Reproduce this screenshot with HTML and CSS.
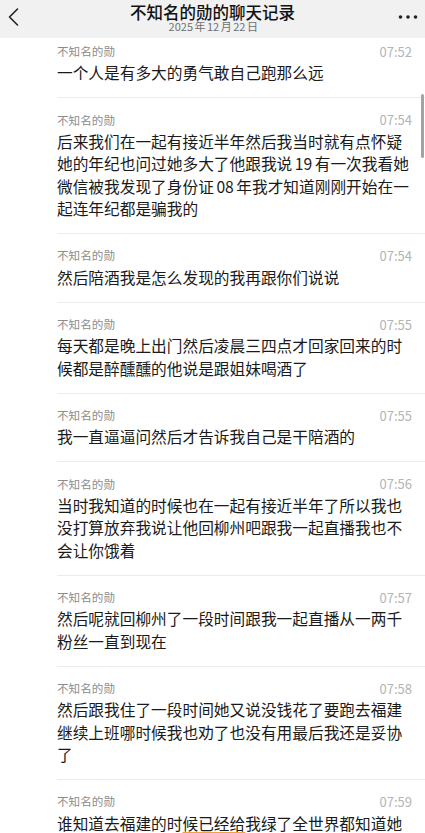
FILE: index.html
```html
<!DOCTYPE html>
<html lang="zh-CN">
<head>
    <meta charset="UTF-8">
    <meta name="viewport" content="width=device-width, initial-scale=1.0">
    <title>不知名的勋的聊天记录</title>
    <link rel="stylesheet" href="styles.css">
</head>
<body>
    <div class="screen">
        <header class="topbar">
            <a class="back" href="#">
                <svg width="12" height="20" viewBox="0 0 12 20">
                    <polyline points="9.5,2 1.5,10 9.5,18" fill="none" stroke="#222" stroke-width="1.6" stroke-linecap="round" stroke-linejoin="round"/>
                </svg>
            </a>
            <div class="title">
                <h1>不知名的勋的聊天记录</h1>
                <p class="date"><span class="num">2025</span>年<span class="num">12</span>月<span class="num">22</span>日</p>
            </div>
            <a class="more" href="#">
                <svg width="20" height="6" viewBox="0 0 20 6">
                    <circle cx="2.5" cy="3" r="1.8" fill="#222"/>
                    <circle cx="10" cy="3" r="1.8" fill="#222"/>
                    <circle cx="17.5" cy="3" r="1.8" fill="#222"/>
                </svg>
            </a>
        </header>

        <main class="chat">
            <div class="msg">
                <div class="msg-head"><span class="name">不知名的勋</span><span class="time">07:52</span></div>
                <p class="msg-text">一个人是有多大的勇气敢自己跑那么远</p>
            </div>
            <div class="msg">
                <div class="msg-head"><span class="name">不知名的勋</span><span class="time">07:54</span></div>
                <p class="msg-text">后来我们在一起有接近半年然后我当时就有点怀疑她的年纪也问过她多大了他跟我说<span class="num">19</span>有一次我看她微信被我发现了身份证<span class="num">08</span>年我才知道刚刚开始在一起连年纪都是骗我的</p>
            </div>
            <div class="msg">
                <div class="msg-head"><span class="name">不知名的勋</span><span class="time">07:54</span></div>
                <p class="msg-text">然后陪酒我是怎么发现的我再跟你们说说</p>
            </div>
            <div class="msg">
                <div class="msg-head"><span class="name">不知名的勋</span><span class="time">07:55</span></div>
                <p class="msg-text">每天都是晚上出门然后凌晨三四点才回家回来的时候都是醉醺醺的他说是跟姐妹喝酒了</p>
            </div>
            <div class="msg">
                <div class="msg-head"><span class="name">不知名的勋</span><span class="time">07:55</span></div>
                <p class="msg-text">我一直逼逼问然后才告诉我自己是干陪酒的</p>
            </div>
            <div class="msg">
                <div class="msg-head"><span class="name">不知名的勋</span><span class="time">07:56</span></div>
                <p class="msg-text">当时我知道的时候也在一起有接近半年了所以我也没打算放弃我说让他回柳州吧跟我一起直播我也不会让你饿着</p>
            </div>
            <div class="msg">
                <div class="msg-head"><span class="name">不知名的勋</span><span class="time">07:57</span></div>
                <p class="msg-text">然后呢就回柳州了一段时间跟我一起直播从一两千粉丝一直到现在</p>
            </div>
            <div class="msg">
                <div class="msg-head"><span class="name">不知名的勋</span><span class="time">07:58</span></div>
                <p class="msg-text">然后跟我住了一段时间她又说没钱花了要跑去福建继续上班哪时候我也劝了也没有用最后我还是妥协了</p>
            </div>
            <div class="msg">
                <div class="msg-head"><span class="name">不知名的勋</span><span class="time">07:59</span></div>
                <p class="msg-text">谁知道去福建的时<span class="mark">候已经给</span>我绿了全世界都知道她</p>
            </div>
        </main>

        <div class="scroll-thumb"></div>
    </div>
</body>
</html>
```

FILE: styles.css
```css
* {
    box-sizing: border-box;
}
body {
    margin: 0;
    padding: 0;
    background-color: #fff;
    color: #1a1a1a;
    font-family: "Noto Sans CJK SC", "Noto Sans", sans-serif;
}
.screen {
    position: relative;
    height: 100vh;
    overflow: hidden;
    display: flex;
    flex-direction: column;
}
.topbar {
    height: 38px;
    flex-shrink: 0;
    background-color: #f1f1f1;
    display: flex;
    align-items: flex-start;
    justify-content: space-between;
}
.back {
    display: block;
    width: 40px;
    padding: 7px 0 0 8px;
    line-height: 0;
}
.more {
    display: block;
    width: 40px;
    padding: 13px 0 0 13px;
    line-height: 0;
}
.title {
    flex: 1;
    text-align: center;
    padding-top: 3px;
}
.title h1 {
    margin: 0;
    font-size: 16.5px;
    line-height: 18px;
    font-weight: 500;
    color: #111;
}
.date {
    margin: -1px 0 0;
    font-size: 11px;
    line-height: 12px;
    color: #6f6f6f;
}
.num {
    display: inline-block;
}
.date .num {
    margin: 0 1.5px;
}
.chat {
    flex: 1;
    overflow: hidden;
}
.msg {
    margin-left: 57px;
    padding: 14.5px 13px 12.4px 0;
    border-bottom: 1px solid #ebebeb;
}
.msg:first-child {
    padding-top: 6px;
}
.msg-head {
    display: flex;
    justify-content: space-between;
    align-items: center;
    height: 14px;
    margin-bottom: 4.3px;
}
.name {
    font-size: 11.6px;
    color: #8c8c8c;
}
.time {
    font-size: 13px;
    color: #b4b4b4;
}
.msg-text {
    margin: 0;
    font-size: 15.7px;
    line-height: 22.4px;
    color: #1a1a1a;
}
.msg-text .num {
    margin: 0 2.5px;
}
.mark {
    text-decoration: underline;
    text-decoration-color: #f2a33a;
    text-decoration-thickness: 2px;
    text-underline-offset: 2px;
}
.scroll-thumb {
    position: absolute;
    top: 94px;
    right: 1px;
    width: 3px;
    height: 64px;
    border-radius: 2px;
    background-color: #a3a3a3;
}
```
